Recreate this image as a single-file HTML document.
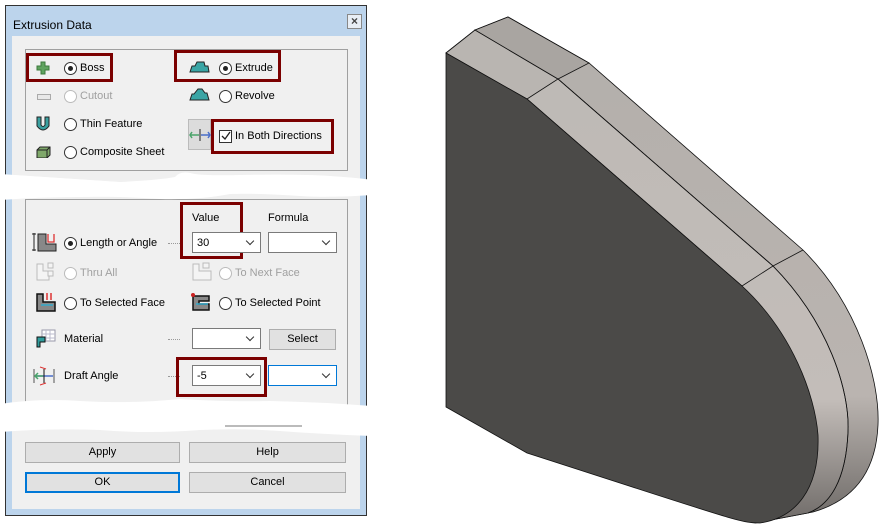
<!DOCTYPE html>
<html><head><meta charset="utf-8"><style>
body{margin:0;width:896px;height:527px;background:#fff;position:relative;overflow:hidden;font-family:"Liberation Sans",sans-serif;font-size:11px;color:#000}
.a{position:absolute}
.t{position:absolute;white-space:nowrap;line-height:14px}
.g{color:#a0a0a0}
.rb{position:absolute;width:11px;height:11px;border:1px solid #333;border-radius:50%;background:#fff}
.rb.on::after{content:"";position:absolute;left:3px;top:3px;width:5px;height:5px;border-radius:50%;background:#222}
.rb.dis{border-color:#bbb}
.red{position:absolute;border:3px solid #7b0000;box-sizing:border-box}
.cb{position:absolute;background:#fff;border:1px solid #7a7a7a;box-sizing:border-box;height:21px}
.cb::after{content:"";position:absolute;right:7px;top:5px;width:5px;height:5px;border-right:1px solid #333;border-bottom:1px solid #333;transform:rotate(45deg)}
.btn{position:absolute;background:#e1e1e1;border:1px solid #adadad;box-sizing:border-box;text-align:center;line-height:18px}
.dots{position:absolute;width:12px;border-top:1px dotted #999;height:0}
</style></head><body>
<div class="a" style="left:5px;top:5px;width:362px;height:511px;background:#bcd4ec;border:1px solid #333;box-sizing:border-box"></div>
<div class="t" style="left:13px;top:18px;font-size:12px">Extrusion Data</div>
<div class="a" style="left:347px;top:14px;width:15px;height:15px;border:1px solid #888;background:#e8eef5;box-sizing:border-box;text-align:center;line-height:12px;font-size:12px;color:#444;font-weight:bold">×</div>
<div class="a" style="left:12px;top:36px;width:348px;height:473px;background:#f0f0f0"></div>
<div class="a" style="left:25px;top:49px;width:323px;height:122px;border:1px solid #a0a0a0;box-sizing:border-box"></div>
<div class="a" style="left:25px;top:199px;width:323px;height:230px;border:1px solid #a0a0a0;border-bottom:none;box-sizing:border-box"></div>

<svg class="a" style="left:36px;top:61px" width="14" height="14"><path d="M5 1h4v4h4v4h-4v4h-4v-4h-4v-4h4z" fill="#5fa35f" stroke="#3c7a3c"/></svg>
<div class="rb on" style="left:64px;top:62px"></div><div class="t" style="left:80px;top:61px">Boss</div>
<div class="red" style="left:26px;top:53px;width:87px;height:29px"></div>
<svg class="a" style="left:189px;top:61px" width="21" height="12"><path d="M1 11L3 5h3l2-4h7l1 4h3l1 6z" fill="#3aa5a5" stroke="#222"/></svg>
<div class="rb on" style="left:219px;top:62px"></div><div class="t" style="left:235px;top:61px">Extrude</div>
<div class="red" style="left:174px;top:50px;width:107px;height:32px"></div>
<div class="a" style="left:37px;top:94px;width:12px;height:4px;border:1px solid #aaa;background:#e8e8e8"></div>
<div class="rb dis" style="left:64px;top:90px"></div><div class="t g" style="left:80px;top:89px">Cutout</div>
<svg class="a" style="left:189px;top:88px" width="21" height="13"><path d="M1 12L3 6h2l4-5h4l3 4h2l2 7z" fill="#3aa5a5" stroke="#222"/></svg>
<div class="rb" style="left:219px;top:90px"></div><div class="t" style="left:235px;top:89px">Revolve</div>
<svg class="a" style="left:36px;top:116px" width="14" height="15"><path d="M1 1h4v8q2 3 4 0V1h4v9q-6 8-12 0z" fill="#3aa0a0" stroke="#222"/></svg>
<div class="rb" style="left:64px;top:118px"></div><div class="t" style="left:80px;top:117px">Thin Feature</div>
<div class="a" style="left:188px;top:119px;width:23px;height:31px;background:#dcdcdc;border:1px solid #bbb;box-sizing:border-box"></div>
<svg class="a" style="left:189px;top:128px" width="22" height="14"><path d="M1 7h9M3 4L1 7l2 3" stroke="#4aa36a" fill="none" stroke-width="1.5"/><path d="M12 7h9M19 4l2 3-2 3" stroke="#4a6fc9" fill="none" stroke-width="1.5"/><path d="M11 1v12" stroke="#222"/></svg>
<div class="a" style="left:219px;top:130px;width:13px;height:13px;border:1px solid #333;background:#fff;box-sizing:border-box"></div>
<svg class="a" style="left:220px;top:131px" width="11" height="11"><path d="M2 5l3 3 5-7" stroke="#222" fill="none" stroke-width="1.3"/></svg>
<div class="t" style="left:235px;top:129px">In Both Directions</div>
<div class="red" style="left:211px;top:119px;width:123px;height:35px"></div>
<svg class="a" style="left:36px;top:145px" width="15" height="13"><path d="M1 5l3-3h10v8l-3 3H1z" fill="#7fa86a" stroke="#222"/><path d="M1 5h10v8M11 5l3-3" stroke="#222" fill="none"/></svg>
<div class="rb" style="left:64px;top:146px"></div><div class="t" style="left:80px;top:145px">Composite Sheet</div>

<div class="t" style="left:192px;top:211px">Value</div>
<div class="t" style="left:268px;top:211px">Formula</div>
<div class="red" style="left:180px;top:202px;width:63px;height:57px"></div>
<svg class="a" style="left:32px;top:232px" width="26" height="20"><path d="M2 1v18M0 2h4M0 18h4" stroke="#222"/><path d="M6 2h8v10h10v7H6z" fill="#888" stroke="#222"/><path d="M16 2v8h6V2" fill="none" stroke="#d33" stroke-width="1.3"/></svg>
<div class="rb on" style="left:64px;top:237px"></div><div class="t" style="left:80px;top:236px">Length or Angle</div>
<div class="dots" style="left:168px;top:243px"></div>
<div class="cb" style="left:192px;top:232px;width:69px"><span class="t" style="left:4px;top:3px">30</span></div>
<div class="cb" style="left:268px;top:232px;width:69px"></div>

<svg class="a" style="left:36px;top:262px" width="20" height="20"><path d="M1 2h6v7h6v9H1z" fill="#f4f4f4" stroke="#bbb"/><path d="M12 1h5v5h-5zM12 9h5v5h-5z" fill="#f4f4f4" stroke="#bbb"/></svg>
<div class="rb dis" style="left:64px;top:267px"></div><div class="t g" style="left:80px;top:266px">Thru All</div>
<svg class="a" style="left:192px;top:262px" width="20" height="20"><path d="M1 2h6v7h12v9H1z" fill="#f4f4f4" stroke="#bbb"/><path d="M11 1h6v5h-6z" fill="#f4f4f4" stroke="#bbb"/></svg>
<div class="rb dis" style="left:219px;top:267px"></div><div class="t g" style="left:235px;top:266px">To Next Face</div>

<svg class="a" style="left:36px;top:292px" width="20" height="20"><path d="M1 2h6v8h12v9H1z" fill="#888" stroke="#111" stroke-width="1.5"/><path d="M5 13h12" stroke="#3ac" stroke-width="1.5"/><path d="M11 1v7M15 1v7" stroke="#d33" stroke-width="1.5"/></svg>
<div class="rb" style="left:64px;top:297px"></div><div class="t" style="left:80px;top:296px">To Selected Face</div>
<svg class="a" style="left:190px;top:292px" width="22" height="20"><path d="M3 4h16v5H9v3h10v6H3z" fill="#888" stroke="#111" stroke-width="1.5"/><path d="M6 12h12" stroke="#3ac" stroke-width="1.5"/><circle cx="3" cy="3" r="2" fill="#c22"/></svg>
<div class="rb" style="left:219px;top:297px"></div><div class="t" style="left:235px;top:296px">To Selected Point</div>

<svg class="a" style="left:35px;top:329px" width="22" height="20"><rect x="7" y="1" width="13" height="11" fill="#fff" stroke="#99a"/><path d="M7 5h13M7 9h13M11 1v11M15 1v11" stroke="#bbc"/><path d="M2 8h8v5h-5v5H2z" fill="#2f9c9c" stroke="#111"/></svg>
<div class="t" style="left:64px;top:332px">Material</div>
<div class="dots" style="left:168px;top:339px"></div>
<div class="cb" style="left:192px;top:328px;width:69px"></div>
<div class="btn" style="left:269px;top:329px;width:67px;height:21px;line-height:19px">Select</div>

<svg class="a" style="left:33px;top:366px" width="22" height="20"><path d="M1 3v14M21 3v14" stroke="#555"/><path d="M2 10h18" stroke="#4a6fc9" stroke-width="1.5"/><path d="M2 10h8M5 7l-3 3 3 3" stroke="#4aa36a" fill="none" stroke-width="1.5"/><path d="M11 3v14" stroke="#111"/><path d="M7 1l6 2M7 19l6-2" stroke="#d33"/></svg>
<div class="t" style="left:64px;top:369px">Draft Angle</div>
<div class="dots" style="left:168px;top:376px"></div>
<div class="cb" style="left:192px;top:365px;width:69px"><span class="t" style="left:4px;top:3px">-5</span></div>
<div class="cb" style="left:268px;top:365px;width:69px;border-color:#0078d7"></div>
<div class="red" style="left:176px;top:357px;width:91px;height:40px"></div>
<div class="a" style="left:64px;top:406px;width:11px;height:11px;border:1px solid #777;background:#fff"></div>

<div class="btn" style="left:25px;top:442px;width:155px;height:21px">Apply</div>
<div class="btn" style="left:189px;top:442px;width:157px;height:21px">Help</div>
<div class="btn" style="left:25px;top:472px;width:155px;height:21px;border:2px solid #0078d7;line-height:17px">OK</div>
<div class="btn" style="left:189px;top:472px;width:157px;height:21px">Cancel</div>

<svg class="a" style="left:0;top:0" width="380" height="527">
<path d="M0 174 Q60 178 120 182 Q160 180 175 177 Q180 171 190 173 Q200 176 240 175 Q300 174 330 176 Q360 178 372 180 L372 195 Q330 198 300 196 Q260 193 230 194 Q200 200 160 199 Q120 196 80 197 Q40 197 0 200 Z" fill="#fff"/>
<path d="M0 404 Q40 398 80 401 Q130 404 180 399 Q230 402 270 401 Q320 402 372 406 L372 436 Q320 434 280 431 Q240 428 200 430 Q150 434 100 430 Q50 428 0 432 Z" fill="#fff"/>
<path d="M225 426h77" stroke="#777"/>
</svg>

<svg class="a" style="left:0;top:0" width="896" height="527">
<defs>
<linearGradient id="gb" x1="0" y1="0" x2="0" y2="1"><stop offset="0" stop-color="#b3afab"/><stop offset="0.75" stop-color="#bab4b0"/><stop offset="1" stop-color="#6e6a67"/></linearGradient>
<linearGradient id="gm" x1="0" y1="0" x2="0" y2="1"><stop offset="0" stop-color="#bdb9b5"/><stop offset="0.75" stop-color="#c3bdb9"/><stop offset="1" stop-color="#6f6b68"/></linearGradient>
</defs>
<path d="M475 30L508 17L589 63L803 250C858 305 880 380 878 425C876 470 855 500 813 512L760 522L773 266L558 79Z" fill="url(#gb)" stroke="#111" stroke-width="0.8"/>
<path d="M446 53L475 30L558 79L773 266C828 322 850 390 848 432C846 480 830 505 808 513L755 523L742 286L527 99Z" fill="url(#gm)" stroke="#111" stroke-width="0.8"/>
<path d="M446 53L475 30L558 79L527 99Z" fill="#b9b5b1" stroke="#111" stroke-width="0.8"/>
<path d="M475 30L508 17L589 63L558 79Z" fill="#a9a5a1" stroke="#111" stroke-width="0.8"/>
<path d="M446 53L527 99L742 286C792 332 815 395 818 435C820 490 795 518 760 523C740 523 735 520 527 453L446 407Z" fill="#4b4a48" stroke="#111" stroke-width="0.8"/>
<path d="M742 286L773 266L803 250M773 266C828 322 850 390 848 432C846 480 830 505 808 513M558 79L773 266" stroke="#111" stroke-width="0.8" fill="none"/>
</svg>
</body></html>
